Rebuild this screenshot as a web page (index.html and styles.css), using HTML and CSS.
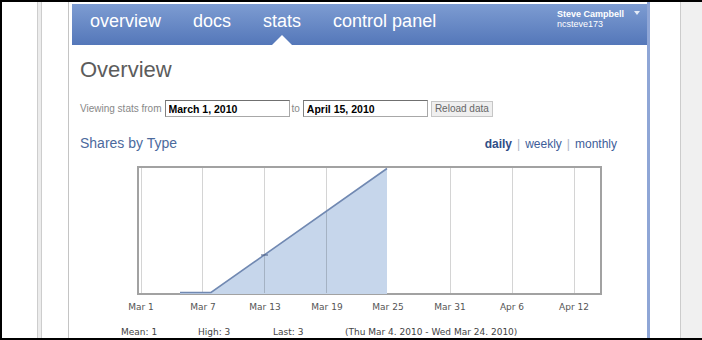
FILE: index.html
```html
<!DOCTYPE html>
<html lang="en">
<head>
  <meta charset="UTF-8" />
  <title>Stats - Overview</title>
  <link rel="stylesheet" href="styles.css">
</head>
<body>
  <div class="frame">
    <div class="gutter"></div>
    <div class="rail"></div>
    <div class="gutter-inner"></div>

    <div class="page">
      <div class="nav">
        <a class="nav-item">overview</a>
        <a class="nav-item">docs</a>
        <a class="nav-item active">stats</a>
        <a class="nav-item">control panel</a>
        <div class="user">
          <div class="user-name">Steve Campbell <span class="caret"></span></div>
          <div class="user-login">ncsteve173</div>
        </div>
      </div>

      <div class="content">
        <h1>Overview</h1>

        <div class="range">
          <span>Viewing stats from</span>
          <input type="text" class="date-input" value="March 1, 2010" />
          <span class="to">to</span>
          <input type="text" class="date-input" value="April 15, 2010" />
          <button class="btn">Reload data</button>
        </div>

        <div class="section-head">
          <h2>Shares by Type</h2>
          <div class="periods">
            <a class="period current">daily</a><span class="sep">|</span><a class="period">weekly</a><span class="sep">|</span><a class="period">monthly</a>
          </div>
        </div>

        <svg class="chart" width="540" height="160" viewBox="0 0 540 160">
          <rect x="58" y="8" width="463" height="127" fill="#fff" stroke="#a2a2a2" stroke-width="2" />
          <polygon points="100,135 100,133.5 131,133.5 307,9.5 307,135" fill="#c6d6eb" />
          <g stroke="rgba(0,0,0,0.17)" stroke-width="1">
            <line x1="61.5" y1="9" x2="61.5" y2="134" />
            <line x1="122.5" y1="9" x2="122.5" y2="134" />
            <line x1="184.5" y1="9" x2="184.5" y2="134" />
            <line x1="246.5" y1="9" x2="246.5" y2="134" />
            <line x1="370.5" y1="9" x2="370.5" y2="134" />
            <line x1="432.5" y1="9" x2="432.5" y2="134" />
            <line x1="494.5" y1="9" x2="494.5" y2="134" />
          </g>
          <line x1="308.5" y1="9" x2="308.5" y2="134" stroke="#fff" stroke-width="1.5" />
          <polyline points="100,133.5 131,133.5 307,9.5" fill="none" stroke="#7189b2" stroke-width="1.6" />
          <line x1="181" y1="96" x2="188" y2="96" stroke="#4a5f85" stroke-width="1" />
          <g class="axis" text-anchor="middle">
            <text x="61" y="151">Mar 1</text>
            <text x="123" y="151">Mar 7</text>
            <text x="185" y="151">Mar 13</text>
            <text x="247" y="151">Mar 19</text>
            <text x="308" y="151">Mar 25</text>
            <text x="370" y="151">Mar 31</text>
            <text x="432" y="151">Apr 6</text>
            <text x="494" y="151">Apr 12</text>
          </g>
        </svg>

        <div class="summary">
          <span>Mean: 1</span>
          <span>High: 3</span>
          <span>Last: 3</span>
          <span>(Thu Mar 4. 2010 - Wed Mar 24. 2010)</span>
        </div>
      </div>
    </div>

    <div class="margin-right"></div>
    <div class="side"></div>
  </div>
</body>
</html>
```

FILE: styles.css
```css
* { box-sizing: border-box; margin: 0; padding: 0; }
body { font-family: "Liberation Sans", Arial, sans-serif; background: #fff; }

.frame { display: flex; height: 340px; border: 2px solid #000; border-right: none; overflow: hidden; background: #fff; }
.gutter { width: 35px; flex: none; }
.rail { width: 5px; flex: none; background: #ececec; border-left: 1px solid #cdcdcd; border-right: 1px solid #cdcdcd; }
.gutter-inner { width: 27px; flex: none; border-right: 1px solid #c4c4c4; margin-right: 3px; }
.page { width: 578px; flex: none; padding-top: 2px; border-right: 3px solid #8fa6d6; }
.margin-right { width: 31px; flex: none; border-right: 1px solid #cccccc; }
.side { flex: 1; background: #f0f0f0; }

/* top navigation */
.nav { display: flex; height: 41px; padding: 7px 7px 0 18px; gap: 32px; background: linear-gradient(#7d9cd2, #5477b9); }
.nav-item { position: relative; color: #fff; font-size: 18px; line-height: 20px; text-decoration: none; }
.nav-item.active::after { content: ""; position: absolute; left: 50%; bottom: 0; margin-left: -10px; border: 10px solid transparent; border-top: none; border-bottom-color: #fff; }
.user { margin-left: auto; margin-top: -2px; color: #fff; font-size: 9px; line-height: 10px; }
.user-name { display: flex; align-items: center; font-weight: bold; }
.caret { margin-left: 10px; margin-top: -2px; border: 3.5px solid transparent; border-bottom: none; border-top: 4px solid #e4ebf7; }

/* page body */
.content { padding: 0 30px 0 8px; }
h1 { margin-top: 12px; font-size: 22px; font-weight: normal; line-height: 26px; color: #5c5c5c; }

.range { display: flex; align-items: center; gap: 3px; height: 17px; margin-top: 17px; font-size: 10px; color: #888; }
.range .to { margin-left: -1px; }
.date-input { width: 125px; height: 17px; padding: 0 3px; border: 1px solid #a8a8a8; border-top-color: #707070; border-left-color: #808080; font-family: "Liberation Sans", Arial, sans-serif; font-size: 10.5px; font-weight: bold; color: #000; background: #fff; }
.btn { width: 62px; height: 16px; border: 1px solid #c6c6c6; background: #efefef; font-family: "Liberation Sans", Arial, sans-serif; font-size: 10px; color: #666; }

.section-head { display: flex; justify-content: space-between; align-items: baseline; margin-top: 17px; line-height: 18px; }
.section-head h2 { font-size: 14px; font-weight: normal; color: #4c6a9d; }
.periods { font-size: 12px; color: #3d5d99; }
.period.current { font-weight: bold; color: #2f4d86; }
.sep { padding: 0 5px; color: #aeb6c6; }

.chart { display: block; margin-top: 6px; }
.axis { font-family: "DejaVu Sans", Verdana, sans-serif; font-size: 9px; fill: #555; }

.summary { display: grid; grid-template-columns: 77px 75px 72px auto; margin-top: 7px; padding-left: 41px; font-family: "DejaVu Sans", Verdana, sans-serif; font-size: 9px; line-height: 12px; color: #444; }
```
